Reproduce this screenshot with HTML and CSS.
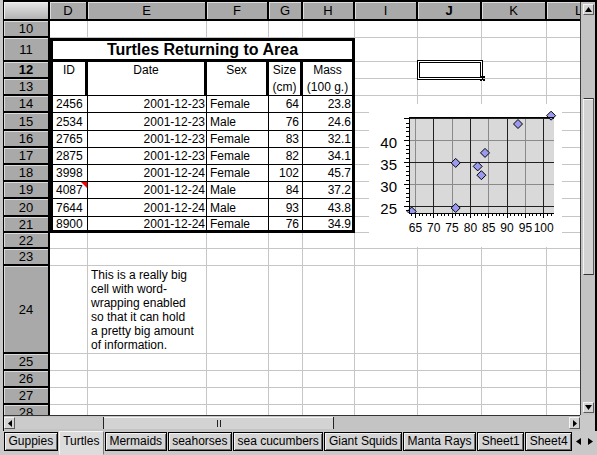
FILE: index.html
```html
<!DOCTYPE html>
<html>
<head>
<meta charset="utf-8">
<title>Turtles</title>
<link rel="stylesheet" href="styles.css">
</head>
<body>
<div class="app">
  <div class="frame">
    <div class="sheet">
      <div class="corner"></div>
      <div class="ch">D</div><div class="ch">E</div><div class="ch">F</div><div class="ch">G</div><div class="ch">H</div><div class="ch">I</div><div class="ch bold">J</div><div class="ch">K</div><div class="ch">L</div>

      <div class="rh">10</div><div class="c"></div><div class="c"></div><div class="c"></div><div class="c"></div><div class="c"></div><div class="c"></div><div class="c"></div><div class="c"></div><div class="c"></div>

      <div class="turtles">
        <div class="title">Turtles Returning to Area</div>
        <div class="hd span">ID</div>
        <div class="hd span">Date</div>
        <div class="hd span">Sex</div>
        <div class="hd">Size</div>
        <div class="hd last">Mass</div>
        <div class="hd sub">(cm)</div>
        <div class="hd sub last">(100 g.)</div>

        <div class="d k1">2456</div><div class="d k2">2001-12-23</div><div class="d k3">Female</div><div class="d k4">64</div><div class="d k5">23.8</div>
        <div class="d k1">2534</div><div class="d k2">2001-12-23</div><div class="d k3">Male</div><div class="d k4">76</div><div class="d k5">24.6</div>
        <div class="d k1">2765</div><div class="d k2">2001-12-23</div><div class="d k3">Female</div><div class="d k4">83</div><div class="d k5">32.1</div>
        <div class="d k1">2875</div><div class="d k2">2001-12-23</div><div class="d k3">Female</div><div class="d k4">82</div><div class="d k5">34.1</div>
        <div class="d k1">3998</div><div class="d k2">2001-12-24</div><div class="d k3">Female</div><div class="d k4">102</div><div class="d k5">45.7</div>
        <div class="d k1">4087<span class="note"></span></div><div class="d k2">2001-12-24</div><div class="d k3">Male</div><div class="d k4">84</div><div class="d k5">37.2</div>
        <div class="d k1">7644</div><div class="d k2">2001-12-24</div><div class="d k3">Male</div><div class="d k4">93</div><div class="d k5">43.8</div>
        <div class="d k1 end">8900</div><div class="d k2 end">2001-12-24</div><div class="d k3 end">Female</div><div class="d k4 end">76</div><div class="d k5 end">34.9</div>
      </div>

      <div class="rh">11</div><div class="c"></div><div class="c"></div><div class="c"></div><div class="c"></div>
      <div class="rh bold">12</div><div class="c"></div><div class="c"></div><div class="c"></div><div class="c"></div>
      <div class="rh">13</div><div class="c"></div><div class="c"></div><div class="c"></div><div class="c"></div>
      <div class="rh">14</div><div class="c"></div><div class="c"></div><div class="c"></div><div class="c"></div>
      <div class="rh">15</div><div class="c"></div><div class="c"></div><div class="c"></div><div class="c"></div>
      <div class="rh">16</div><div class="c"></div><div class="c"></div><div class="c"></div><div class="c"></div>
      <div class="rh">17</div><div class="c"></div><div class="c"></div><div class="c"></div><div class="c"></div>
      <div class="rh">18</div><div class="c"></div><div class="c"></div><div class="c"></div><div class="c"></div>
      <div class="rh">19</div><div class="c"></div><div class="c"></div><div class="c"></div><div class="c"></div>
      <div class="rh">20</div><div class="c"></div><div class="c"></div><div class="c"></div><div class="c"></div>
      <div class="rh">21</div><div class="c"></div><div class="c"></div><div class="c"></div><div class="c"></div>

      <div class="rh">22</div><div class="c"></div><div class="c"></div><div class="c"></div><div class="c"></div><div class="c"></div><div class="c"></div><div class="c"></div><div class="c"></div><div class="c"></div>
      <div class="rh">23</div><div class="c"></div><div class="c"></div><div class="c"></div><div class="c"></div><div class="c"></div><div class="c"></div><div class="c"></div><div class="c"></div><div class="c"></div>
      <div class="rh">24</div><div class="c"></div><div class="c wrap"><div>This is a really big<br>cell with word-<br>wrapping enabled<br>so that it can hold<br>a pretty big amount<br>of information.</div></div><div class="c"></div><div class="c"></div><div class="c"></div><div class="c"></div><div class="c"></div><div class="c"></div><div class="c"></div>
      <div class="rh">25</div><div class="c"></div><div class="c"></div><div class="c"></div><div class="c"></div><div class="c"></div><div class="c"></div><div class="c"></div><div class="c"></div><div class="c"></div>
      <div class="rh">26</div><div class="c"></div><div class="c"></div><div class="c"></div><div class="c"></div><div class="c"></div><div class="c"></div><div class="c"></div><div class="c"></div><div class="c"></div>
      <div class="rh">27</div><div class="c"></div><div class="c"></div><div class="c"></div><div class="c"></div><div class="c"></div><div class="c"></div><div class="c"></div><div class="c"></div><div class="c"></div>
      <div class="rh">28</div><div class="c"></div><div class="c"></div><div class="c"></div><div class="c"></div><div class="c"></div><div class="c"></div><div class="c"></div><div class="c"></div><div class="c"></div>

      <div class="sel"></div>
      <svg class="handle" width="5" height="5" viewBox="0 0 5 5"><rect x="0" y="0" width="2" height="2"/><rect x="3" y="0" width="2" height="2"/><rect x="0" y="3" width="2" height="2"/><rect x="3" y="3" width="2" height="2"/></svg>

      <svg class="chart" width="193" height="143" viewBox="369 104 193 143">
        <defs><clipPath id="pc"><rect x="405" y="100" width="160" height="113"/></clipPath></defs>
        <rect x="369" y="104" width="193" height="143" fill="#fff"/>
        <rect x="409" y="117" width="145" height="96" fill="#d9d9d9"/>
        <g stroke="#8a8a8a" stroke-width="1" shape-rendering="crispEdges">
          <path d="M415.5 117V213M452.5 117V213M488.5 117V213M525.5 117V213M409 184.5H554M409 140.5H554"/>
        </g>
        <g stroke="#202020" stroke-width="1" shape-rendering="crispEdges">
          <path d="M433.5 117V213M470.5 117V213M507.5 117V213M543.5 117V213M409 206.5H554M409 162.5H554M409 118.5H554"/>
        </g>
        <g clip-path="url(#pc)" fill="#9a9af0" stroke="#000" stroke-width="1">
          <polygon points="411.7,207 416.2,211.5 411.7,216 407.2,211.5"/>
          <polygon points="455.7,203.5 460.2,208 455.7,212.5 451.2,208"/>
          <polygon points="481.4,170.7 485.9,175.2 481.4,179.7 476.9,175.2"/>
          <polygon points="477.7,161.9 482.2,166.4 477.7,170.9 473.2,166.4"/>
          <polygon points="551.1,111.2 555.6,115.7 551.1,120.2 546.6,115.7"/>
          <polygon points="485,148.4 489.5,152.9 485,157.4 480.5,152.9"/>
          <polygon points="518,119.5 522.5,124 518,128.5 513.5,124"/>
          <polygon points="455.7,158.4 460.2,162.9 455.7,167.4 451.2,162.9"/>
        </g>
        <g stroke="#000" stroke-width="1" fill="none" shape-rendering="crispEdges">
          <path d="M409.5 117V213.5H554M409 117.5H554"/>
          <path d="M406 210.5H409M404 206.5H409M406 201.5H409M406 197.5H409M406 193.5H409M406 188.5H409M404 184.5H409M406 180.5H409M406 175.5H409M406 171.5H409M406 166.5H409M404 162.5H409M406 158.5H409M406 153.5H409M406 149.5H409M406 145.5H409M404 140.5H409M406 136.5H409M406 131.5H409M406 127.5H409M406 123.5H409M404 118.5H409"/>
          <path d="M411.5 213V216M415.5 213V218M419.5 213V216M422.5 213V216M426.5 213V216M430.5 213V216M433.5 213V218M437.5 213V216M441.5 213V216M444.5 213V216M448.5 213V216M452.5 213V218M455.5 213V216M459.5 213V216M463.5 213V216M466.5 213V216M470.5 213V218M474.5 213V216M477.5 213V216M481.5 213V216M485.5 213V216M488.5 213V218M492.5 213V216M496.5 213V216M499.5 213V216M503.5 213V216M507.5 213V218M510.5 213V216M514.5 213V216M518.5 213V216M521.5 213V216M525.5 213V218M529.5 213V216M532.5 213V216M536.5 213V216M540.5 213V216M543.5 213V218M547.5 213V216M551.5 213V216"/>
        </g>
        <g class="ylab" text-anchor="end">
          <text x="397" y="148.1">40</text>
          <text x="397" y="170">35</text>
          <text x="397" y="191.9">30</text>
          <text x="397" y="213.8">25</text>
        </g>
        <g class="xlab" text-anchor="middle">
          <text x="415.4" y="232">65</text>
          <text x="433.7" y="232">70</text>
          <text x="452" y="232">75</text>
          <text x="470.4" y="232">80</text>
          <text x="488.7" y="232">85</text>
          <text x="507" y="232">90</text>
          <text x="525.4" y="232">95</text>
          <text x="543.7" y="232">100</text>
        </g>
      </svg>
    </div>

    <div class="vscroll">
      <div class="sbtn"><svg width="7" height="5" viewBox="0 0 7 5"><polygon points="0,5 3.5,0 7,5"/></svg></div>
      <div class="vgap"></div>
      <div class="vthumb"></div>
      <div class="vrest"></div>
      <div class="sbtn"><svg width="7" height="5" viewBox="0 0 7 5"><polygon points="0,0 7,0 3.5,5"/></svg></div>
    </div>

    <div class="hscroll">
      <div class="sbtn hb"><svg width="4" height="7" viewBox="0 0 4 7"><polygon points="4,0 4,7 0,3.5"/></svg></div>
      <div class="hgap"></div>
      <div class="hthumb"><span class="grip"></span><span class="grip"></span></div>
      <div class="hrest"></div>
      <div class="sbtn hb"><svg width="4" height="7" viewBox="0 0 4 7"><polygon points="0,0 4,3.5 0,7"/></svg></div>
    </div>

    <div class="sbcorner"></div>
  </div>

  <div class="tabs">
    <div class="tab">Guppies</div>
    <div class="tab active">Turtles</div>
    <div class="tab">Mermaids</div>
    <div class="tab">seahorses</div>
    <div class="tab">sea cucumbers</div>
    <div class="tab">Giant Squids</div>
    <div class="tab">Manta Rays</div>
    <div class="tab">Sheet1</div>
    <div class="tab">Sheet4</div>
    <div class="tabnav">
      <svg width="5" height="7" viewBox="0 0 5 7"><polygon points="5,0 5,7 0,3.5"/></svg>
      <svg width="5" height="7" viewBox="0 0 5 7"><polygon points="0,0 5,3.5 0,7"/></svg>
    </div>
  </div>
</div>
</body>
</html>
```

FILE: styles.css
```css
* { box-sizing: border-box; margin: 0; padding: 0; }

html, body { width: 597px; height: 455px; overflow: hidden; }

body {
  background: #c9c9c9;
  font-family: "Liberation Sans", Arial, Helvetica, sans-serif;
  font-size: 12px;
  color: #000;
}

.app {
  width: 597px;
  height: 455px;
  display: flex;
  flex-direction: column;
  background: #c9c9c9;
}

.frame {
  margin-left: 3px;
  width: 594px;
  height: 431px;
  border-left: 1px solid #000;
  border-top: 2px solid #000;
  border-right: 2px solid #000;
  display: grid;
  grid-template-columns: 576px 15px;
  grid-template-rows: 413px 16px;
}

/* ---------- sheet grid ---------- */
.sheet {
  position: relative;
  overflow: hidden;
  background: #fff;
  display: grid;
  grid-template-columns: 46px 38px 119px 62px 34px 52px 63px 64px 65px 65px;
  grid-template-rows: 19px 17px 24px 17px 17px 17px 18px 17px 17px 17px 17px 18px 16px 16px 17px 88px 17px 17px 17px 17px;
}

.corner {
  background: linear-gradient(#e8e8e8, #b3b3b3);
  border-right: 2px solid #000;
  border-bottom: 2px solid #000;
  box-shadow: inset 1px 1px 0 #f2f2f2;
}

.ch, .rh {
  background: #a9a9a9;
  border-right: 2px solid #000;
  border-bottom: 2px solid #000;
  box-shadow: inset 1px 1px 0 #dcdcdc;
  display: flex;
  align-items: center;
  justify-content: center;
  font-size: 13px;
}

.bold { font-weight: bold; }

.c {
  border-right: 1px solid #c6c6c6;
  border-bottom: 1px solid #c6c6c6;
}

.wrap {
  padding-left: 3px;
  display: flex;
  align-items: center;
  line-height: 14px;
  white-space: nowrap;
}

/* ---------- turtles table ---------- */
.turtles {
  grid-column: 2 / 7;
  grid-row: 3 / 14;
  border: 3px solid #000;
  background: #fff;
  display: grid;
  grid-template-columns: 35px 119px 62px 34px 49px;
  grid-template-rows: 21px 17px 17px 17px 18px 17px 17px 17px 17px 18px 13px;
}

.title {
  grid-column: 1 / -1;
  border-bottom: 3px solid #000;
  font-weight: bold;
  font-size: 16px;
  display: flex;
  align-items: center;
  justify-content: center;
  white-space: nowrap;
}

.hd {
  border-right: 3px solid #000;
  text-align: center;
  line-height: 17px;
  white-space: nowrap;
}
.hd.span { grid-row: span 2; border-bottom: 1px solid #000; }
.hd.sub { border-bottom: 1px solid #000; line-height: 16px; }
.hd.last { border-right: none; }

.d {
  position: relative;
  border-right: 1px solid #000;
  border-bottom: 1px solid #000;
  display: flex;
  align-items: center;
  white-space: nowrap;
}
.d.end { border-bottom: none; }
.k1 { padding-left: 3px; }
.k2 { justify-content: flex-end; padding-right: 1px; }
.k3 { padding-left: 3px; }
.k4 { justify-content: flex-end; padding-right: 3px; }
.k5 { justify-content: flex-end; padding-right: 1px; border-right: none; }

.note {
  position: absolute;
  top: 0;
  right: 0;
  width: 0;
  height: 0;
  border-top: 6px solid #f00;
  border-left: 6px solid transparent;
}

/* ---------- overlays ---------- */
.sel {
  position: absolute;
  left: 413px;
  top: 58px;
  width: 66px;
  height: 20px;
  border: 1px solid #000;
  box-shadow: inset 0 0 0 1px #fff, inset 0 0 0 2px #000;
}

.handle {
  position: absolute;
  left: 476px;
  top: 74px;
  fill: #000;
}

.chart {
  position: absolute;
  left: 365px;
  top: 102px;
}
.ylab { font-family: "Liberation Sans", Arial, sans-serif; font-size: 15px; fill: #000; }
.xlab { font-family: "Liberation Sans", Arial, sans-serif; font-size: 12px; fill: #000; }

/* ---------- scrollbars ---------- */
.sbtn {
  background: #d4d4d4;
  border: 1px solid;
  border-color: #f4f4f4 #5a5a5a #5a5a5a #f4f4f4;
  display: flex;
  align-items: center;
  justify-content: center;
  flex: none;
}
.sbtn svg { fill: #000; display: block; }

.vscroll {
  background: #c4c4c4;
  border-left: 1px solid #3c3c3c;
  padding: 2px 1px 2px 2px;
  display: flex;
  flex-direction: column;
}
.vscroll .sbtn { height: 11px; }
.vgap { height: 83px; flex: none; }
.vthumb {
  height: 177px;
  flex: none;
  background: #d3d3d3;
  border: 1px solid;
  border-color: #333 #5a5a5a #333 #f4f4f4;
  box-shadow: inset 0 1px 0 #f4f4f4;
}
.vrest { flex: 1; }

.hscroll {
  background: #c4c4c4;
  border-top: 1px solid #333;
  padding: 1px 0 2px 0;
  display: flex;
}
.hb { width: 11px; }
.hgap { width: 88px; flex: none; background: #cbcbcb; }
.hthumb {
  width: 231px;
  flex: none;
  background: #d3d3d3;
  border-left: 1px solid #222;
  border-right: 1px solid #222;
  box-shadow: inset 0 1px 0 #f4f4f4;
  display: flex;
  align-items: center;
  justify-content: center;
  gap: 2px;
}
.grip { width: 1px; height: 7px; background: #222; }
.hrest { flex: 1; }

.sbcorner { background: #c9c9c9; }

/* ---------- sheet tabs ---------- */
.tabs {
  height: 24px;
  display: flex;
  align-items: flex-start;
  gap: 1px;
  padding-left: 4px;
}

.tab {
  margin-top: 1px;
  height: 19px;
  padding: 0 3.5px;
  border: 1px solid #000;
  background: #d4d4d4;
  box-shadow: inset 1px 1px 0 #f2f2f2, inset -1px -1px 0 #6a6a6a;
  line-height: 17px;
  white-space: nowrap;
}

.tab.active {
  margin-top: 0;
  height: 24px;
  background: #dcdcdc;
  border-color: #f6f6f6 #7a7a7a transparent #f6f6f6;
  box-shadow: none;
  line-height: 19px;
}

.tabnav {
  display: flex;
  gap: 7px;
  margin-left: 3px;
  margin-top: 7px;
}
.tabnav svg { fill: #000; display: block; }
```
